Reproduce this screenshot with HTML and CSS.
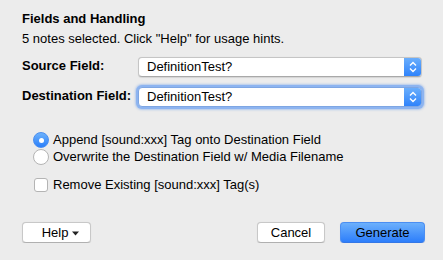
FILE: index.html
```html
<!DOCTYPE html>
<html lang="en">
<head>
    <meta charset="UTF-8">
    <title>Fields and Handling</title>
    <link rel="stylesheet" href="styles.css">
</head>
<body>
    <div class="dialog">
        <div class="section-title">Fields and Handling</div>
        <div class="hint">5 notes selected. Click "Help" for usage hints.</div>

        <div class="field-grid">
            <label class="field-label">Source Field:</label>
            <div class="select">
                <span class="select-value">DefinitionTest?</span>
                <span class="select-arrows">
                    <svg width="8" height="12" viewBox="0 0 8 12"><path d="M1 4.5 L4 1.5 L7 4.5 M1 7.5 L4 10.5 L7 7.5" fill="none" stroke="#fff" stroke-width="1.4"/></svg>
                </span>
            </div>

            <label class="field-label">Destination Field:</label>
            <div class="select focused">
                <span class="select-value">DefinitionTest?</span>
                <span class="select-arrows">
                    <svg width="8" height="12" viewBox="0 0 8 12"><path d="M1 4.5 L4 1.5 L7 4.5 M1 7.5 L4 10.5 L7 7.5" fill="none" stroke="#fff" stroke-width="1.4"/></svg>
                </span>
            </div>
        </div>

        <div class="options">
            <div class="radio-group">
                <div class="option">
                    <span class="radio checked"></span>
                    <span>Append [sound:xxx] Tag onto Destination Field</span>
                </div>
                <div class="option">
                    <span class="radio"></span>
                    <span>Overwrite the Destination Field w/ Media Filename</span>
                </div>
            </div>
            <div class="option check-option">
                <span class="checkbox"></span>
                <span>Remove Existing [sound:xxx] Tag(s)</span>
            </div>
        </div>

        <div class="button-row">
            <button class="btn help-btn">
                <span>Help</span>
                <svg class="caret" width="7" height="5" viewBox="0 0 7 5"><path d="M0 0.5 H7 L3.5 4.5 Z" fill="#222"/></svg>
            </button>
            <div class="button-right">
                <button class="btn">Cancel</button>
                <button class="btn default">Generate</button>
            </div>
        </div>
    </div>
</body>
</html>
```

FILE: styles.css
```css
body {
    margin: 0;
    padding: 0;
    background: #ececec;
    font-family: 'Liberation Sans', Arial, sans-serif;
    font-size: 13px;
    color: #000;
    overflow: hidden;
}

.dialog {
    padding: 11px 18px 0 22px;
}

.section-title {
    font-weight: bold;
    line-height: 16px;
}

.hint {
    margin-top: 4px;
    line-height: 16px;
}

.field-grid {
    display: grid;
    grid-template-columns: 116px 284px;
    row-gap: 10px;
    margin-top: 10px;
    align-items: center;
}

.field-label {
    font-weight: bold;
    margin-top: -4px;
}

.select {
    height: 18px;
    display: flex;
    align-items: stretch;
    background: #fff;
    border: 1px solid #c5c5c5;
    border-bottom-color: #a9a9a9;
    border-radius: 4px;
    box-shadow: 0 0.5px 1px rgba(0, 0, 0, 0.1);
    overflow: hidden;
}

.select.focused {
    box-shadow: 0 0 0 2px #8db4f0, 0 0 2px 3px rgba(120, 165, 235, 0.5);
    border-color: #7ea6e3;
}

.select-value {
    flex: 1;
    padding-left: 8px;
    line-height: 18px;
}

.select-arrows {
    width: 17px;
    display: flex;
    align-items: center;
    justify-content: center;
    background: linear-gradient(#6aaefc, #2f83fb);
}

.options {
    margin-top: 25px;
    padding-left: 11px;
}

.option {
    display: flex;
    align-items: center;
    gap: 4px;
    line-height: 16px;
}

.radio-group .option + .option {
    margin-top: 1px;
}

.radio {
    width: 14px;
    height: 14px;
    border-radius: 50%;
    background: #fff;
    border: 1px solid #b4b4b4;
    box-sizing: content-box;
    position: relative;
    flex-shrink: 0;
}

.radio.checked {
    background: linear-gradient(#6db2fc, #2a7ffa);
    border-color: #4a8ef0;
}

.radio.checked::after {
    content: "";
    position: absolute;
    left: 5px;
    top: 5px;
    width: 5px;
    height: 5px;
    border-radius: 50%;
    background: #fff;
}

.check-option {
    margin-top: 12px;
    padding-left: 1px;
    gap: 5px;
}

.checkbox {
    width: 12px;
    height: 12px;
    background: #fff;
    border: 1px solid #b4b4b4;
    border-radius: 3px;
    flex-shrink: 0;
}

.button-row {
    display: flex;
    justify-content: space-between;
    margin-top: 29px;
}

.button-right {
    display: flex;
    gap: 15px;
}

.btn {
    height: 21px;
    width: 68px;
    padding: 0;
    font-family: inherit;
    font-size: 13px;
    color: #000;
    background: #fff;
    border: 1px solid #c8c8c8;
    border-bottom-color: #b0b0b0;
    border-radius: 4px;
    box-shadow: 0 0.5px 1px rgba(0, 0, 0, 0.1);
}

.help-btn {
    width: 69px;
    display: flex;
    align-items: center;
    justify-content: center;
    gap: 4px;
    padding-left: 8px;
}

.caret {
    margin-top: 1px;
}

.btn.default {
    width: 85px;
    background: linear-gradient(#6cb0fc, #2d7efb);
    border-color: #4b8ef2;
    border-bottom-color: #3477e6;
}
```
